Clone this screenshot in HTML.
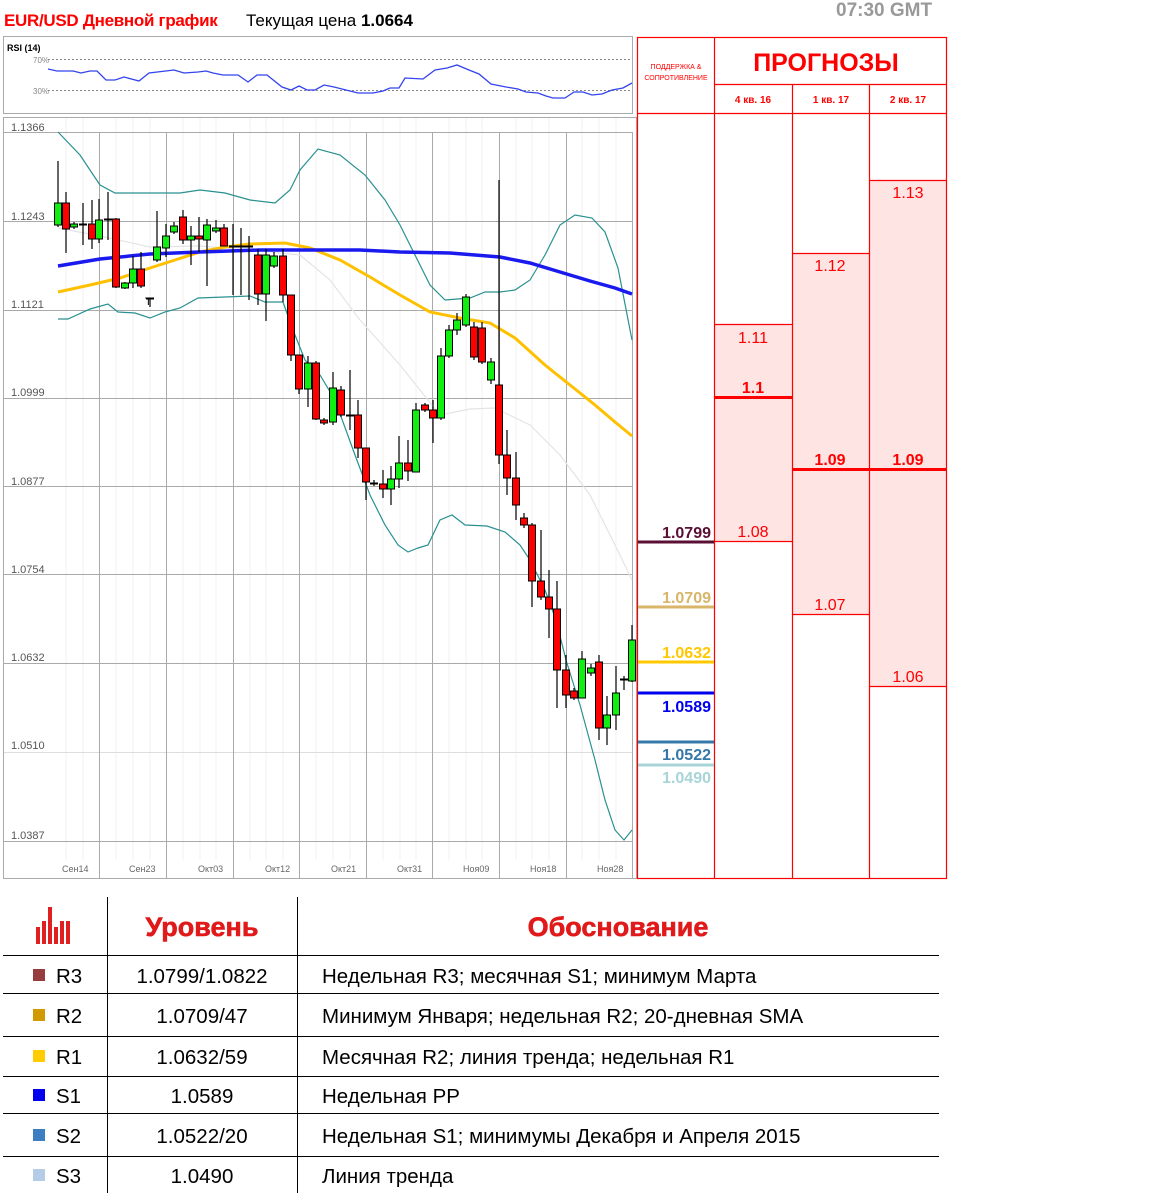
<!DOCTYPE html>
<html><head><meta charset="utf-8"><style>
body{margin:0;width:1152px;height:1193px;background:#fff;position:relative;overflow:hidden;font-family:"Liberation Sans","DejaVu Sans",sans-serif}
.a{position:absolute}
</style></head><body>
<div class="a" style="left:4px;top:11px;font-size:17px;font-weight:bold;color:#f00;letter-spacing:-0.3px">EUR/USD Дневной график</div>
<div class="a" style="left:246px;top:11px;font-size:17px;color:#000">Текущая цена <b>1.0664</b></div>
<div class="a" style="left:836px;top:0px;font-size:19px;font-weight:bold;color:#999">07:30 GMT</div>

<svg class="a" style="left:0;top:0" width="1152" height="890">
<rect x="3.5" y="36.5" width="629" height="77" fill="#fff" stroke="#aaa"/>
<text x="7" y="51" font-size="9" font-weight="bold" font-family="Liberation Sans">RSI (14)</text>
<text x="33" y="63" font-size="8" fill="#888" font-family="Liberation Sans">70%</text>
<text x="33" y="94" font-size="8" fill="#888" font-family="Liberation Sans">30%</text>
<line x1="48" y1="59.5" x2="632" y2="59.5" stroke="#888" stroke-dasharray="2,2"/>
<line x1="48" y1="90.5" x2="632" y2="90.5" stroke="#888" stroke-dasharray="2,2"/>
<polyline fill="none" stroke="#3344ee" stroke-width="1.3" points="48,69 57,71 73,71 81,73 90,71 97,71 106,80 115,80 124,77 139,81 149,73 174,70 184,73 198,72 206,71 213,73 223,75 238,75 248,82 257,75 267,75 282,87 291,90 299,86 307,90 315,90 324,85 334,87 346,90 358,93 373,93 383,91 390,88 399,88 405,78 423,79 435,70 447,68 457,65 469,70 479,74 491,84 506,87 518,89 526,92 538,93 546,96 553,98 565,98 574,92 583,92 592,95 602,94 612,90 623,88 632,83"/>
<rect x="3.5" y="117.5" width="633" height="761" fill="#fff" stroke="#aaa"/>
<g stroke="#f2f2f2">
<line x1="66" y1="118" x2="66" y2="860"/><line x1="83" y1="118" x2="83" y2="860"/><line x1="116" y1="118" x2="116" y2="860"/><line x1="133" y1="118" x2="133" y2="860"/><line x1="150" y1="118" x2="150" y2="860"/><line x1="183" y1="118" x2="183" y2="860"/><line x1="200" y1="118" x2="200" y2="860"/><line x1="216" y1="118" x2="216" y2="860"/><line x1="250" y1="118" x2="250" y2="860"/><line x1="266" y1="118" x2="266" y2="860"/><line x1="283" y1="118" x2="283" y2="860"/><line x1="316" y1="118" x2="316" y2="860"/><line x1="333" y1="118" x2="333" y2="860"/><line x1="350" y1="118" x2="350" y2="860"/><line x1="383" y1="118" x2="383" y2="860"/><line x1="400" y1="118" x2="400" y2="860"/><line x1="416" y1="118" x2="416" y2="860"/><line x1="449" y1="118" x2="449" y2="860"/><line x1="466" y1="118" x2="466" y2="860"/><line x1="482" y1="118" x2="482" y2="860"/><line x1="516" y1="118" x2="516" y2="860"/><line x1="532" y1="118" x2="532" y2="860"/><line x1="549" y1="118" x2="549" y2="860"/><line x1="582" y1="118" x2="582" y2="860"/><line x1="599" y1="118" x2="599" y2="860"/><line x1="616" y1="118" x2="616" y2="860"/>
</g>
<g stroke="#aaa">
<line x1="4" y1="132.5" x2="632" y2="132.5"/><line x1="4" y1="221.5" x2="632" y2="221.5"/><line x1="4" y1="310.5" x2="632" y2="310.5"/><line x1="4" y1="398.5" x2="632" y2="398.5"/><line x1="4" y1="486.5" x2="632" y2="486.5"/><line x1="4" y1="574.5" x2="632" y2="574.5"/><line x1="4" y1="663.5" x2="632" y2="663.5"/><line x1="4" y1="752.5" x2="632" y2="752.5" stroke="#ddd"/><line x1="4" y1="841.5" x2="632" y2="841.5"/>
<line x1="99.5" y1="132" x2="99.5" y2="878"/><line x1="166.5" y1="132" x2="166.5" y2="878"/><line x1="233.5" y1="132" x2="233.5" y2="878"/><line x1="299.5" y1="132" x2="299.5" y2="878"/><line x1="366.5" y1="132" x2="366.5" y2="878"/><line x1="432.5" y1="132" x2="432.5" y2="878"/><line x1="499.5" y1="132" x2="499.5" y2="878"/><line x1="566.5" y1="132" x2="566.5" y2="878"/><line x1="632.5" y1="132" x2="632.5" y2="878"/>
</g>
<g font-size="11" fill="#555" font-family="Liberation Sans">
<text x="11" y="131">1.1366</text><text x="11" y="220">1.1243</text><text x="11" y="308">1.1121</text><text x="11" y="396">1.0999</text><text x="11" y="485">1.0877</text><text x="11" y="573">1.0754</text><text x="11" y="661">1.0632</text><text x="11" y="749">1.0510</text><text x="11" y="839">1.0387</text>
</g>
<g font-size="9" fill="#666" font-family="Liberation Sans">
<text x="62" y="872">Сен14</text><text x="129" y="872">Сен23</text><text x="198" y="872">Окт03</text><text x="265" y="872">Окт12</text><text x="331" y="872">Окт21</text><text x="397" y="872">Окт31</text><text x="463" y="872">Ноя09</text><text x="530" y="872">Ноя18</text><text x="597" y="872">Ноя28</text>
</g>
<polyline fill="none" stroke="#e4e4e4" stroke-width="1.2" points="58,228 100,236 150,247 200,246 250,250 300,255 330,280 360,320 400,365 440,415 470,409 495,408 530,425 560,455 590,495 615,545 632,580"/>
<polyline fill="none" stroke="#2a9090" stroke-width="1.2" points="58,132 80,155 100,185 115,193 180,193 200,190 225,193 250,200 275,203 290,190 300,170 318,149 340,155 365,175 385,200 400,225 415,255 430,285 445,300 470,298 485,292 500,292 515,290 530,280 545,255 560,225 575,215 592,218 605,232 618,268 632,340"/>
<polyline fill="none" stroke="#2a9090" stroke-width="1.2" points="58,319 68,319 90,309 108,304 118,312 135,313 150,318 165,312 180,308 198,298 225,297 250,296 265,302 283,302 293,330 305,360 320,375 335,400 355,455 370,495 385,525 398,545 408,552 418,548 428,545 440,520 452,515 465,525 487,526 505,532 520,545 530,560 545,590 556,620 566,660 580,705 595,760 605,800 615,830 624,840 632,830"/>
<polyline fill="none" stroke="#ffc000" stroke-width="3" points="58,292 90,285 120,278 150,268 175,260 200,252 225,247 250,244 285,243 310,248 340,260 370,277 400,295 430,312 460,318 490,323 515,338 545,365 570,385 595,405 615,422 632,436"/>
<polyline fill="none" stroke="#1a1aee" stroke-width="3.5" points="58,266 100,259 150,254 200,252 260,250 320,250 360,250 400,252 450,253 500,257 530,263 560,272 590,281 615,288 632,294"/>
<g stroke="#000" stroke-width="1.2">
<line x1="58" y1="161" x2="58" y2="227"/><line x1="66" y1="192" x2="66" y2="253"/><line x1="74" y1="222" x2="74" y2="229"/><line x1="83" y1="203" x2="83" y2="245"/><line x1="92" y1="200" x2="92" y2="249"/><line x1="99" y1="199" x2="99" y2="243"/><line x1="108" y1="192" x2="108" y2="240"/><line x1="116" y1="218" x2="116" y2="288"/><line x1="125" y1="282" x2="125" y2="289"/><line x1="133" y1="256" x2="133" y2="288"/><line x1="141" y1="252" x2="141" y2="288"/><line x1="150" y1="298" x2="150" y2="307"/><line x1="157" y1="211" x2="157" y2="262"/><line x1="166" y1="224" x2="166" y2="257"/><line x1="174" y1="222" x2="174" y2="234"/><line x1="183" y1="210" x2="183" y2="244"/><line x1="191" y1="226" x2="191" y2="265"/><line x1="199" y1="217" x2="199" y2="252"/><line x1="207" y1="219" x2="207" y2="286"/><line x1="216" y1="220" x2="216" y2="233"/><line x1="224" y1="224" x2="224" y2="246"/><line x1="233" y1="224" x2="233" y2="295"/><line x1="241" y1="228" x2="241" y2="295"/><line x1="249" y1="236" x2="249" y2="300"/><line x1="258" y1="249" x2="258" y2="305"/><line x1="266" y1="249" x2="266" y2="321"/><line x1="274" y1="252" x2="274" y2="268"/><line x1="283" y1="249" x2="283" y2="302"/><line x1="291" y1="295" x2="291" y2="361"/><line x1="299" y1="355" x2="299" y2="394"/><line x1="308" y1="356" x2="308" y2="407"/><line x1="316" y1="361" x2="316" y2="420"/><line x1="324" y1="418" x2="324" y2="425"/><line x1="333" y1="372" x2="333" y2="425"/><line x1="341" y1="386" x2="341" y2="417"/><line x1="350" y1="370" x2="350" y2="430"/><line x1="358" y1="400" x2="358" y2="458"/><line x1="366" y1="448" x2="366" y2="500"/><line x1="374" y1="480" x2="374" y2="486"/><line x1="383" y1="470" x2="383" y2="498"/><line x1="391" y1="466" x2="391" y2="505"/><line x1="399" y1="436" x2="399" y2="488"/><line x1="408" y1="440" x2="408" y2="481"/><line x1="416" y1="403" x2="416" y2="472"/><line x1="425" y1="403" x2="425" y2="412"/><line x1="433" y1="400" x2="433" y2="443"/><line x1="441" y1="348" x2="441" y2="420"/><line x1="449" y1="325" x2="449" y2="358"/><line x1="457" y1="313" x2="457" y2="335"/><line x1="466" y1="294" x2="466" y2="327"/><line x1="474" y1="322" x2="474" y2="360"/><line x1="482" y1="322" x2="482" y2="364"/><line x1="491" y1="358" x2="491" y2="384"/><line x1="499" y1="180" x2="499" y2="464"/><line x1="507" y1="430" x2="507" y2="495"/><line x1="516" y1="452" x2="516" y2="520"/><line x1="524" y1="513" x2="524" y2="528"/><line x1="532" y1="523" x2="532" y2="607"/><line x1="541" y1="530" x2="541" y2="600"/><line x1="549" y1="570" x2="549" y2="638"/><line x1="557" y1="581" x2="557" y2="708"/><line x1="566" y1="655" x2="566" y2="708"/><line x1="574" y1="688" x2="574" y2="700"/><line x1="582" y1="651" x2="582" y2="698"/><line x1="591" y1="664" x2="591" y2="676"/><line x1="599" y1="655" x2="599" y2="740"/><line x1="607" y1="696" x2="607" y2="745"/><line x1="616" y1="666" x2="616" y2="730"/><line x1="624" y1="676" x2="624" y2="690"/><line x1="632" y1="625" x2="632" y2="682"/>
</g>
<g stroke="#000" stroke-width="1">
<rect x="54.5" y="203" width="7" height="22" fill="#11ee11"/><rect x="62.5" y="203" width="7" height="26" fill="#f00"/><rect x="70.5" y="224" width="7" height="3" fill="#11ee11"/><rect x="79.5" y="224" width="7" height="1" fill="#000"/><rect x="88.5" y="224" width="7" height="15" fill="#f00"/><rect x="95.5" y="220" width="7" height="19" fill="#11ee11"/><rect x="104.5" y="219" width="7" height="1" fill="#000"/><rect x="112.5" y="219" width="7" height="68" fill="#f00"/><rect x="121.5" y="283" width="7" height="5" fill="#11ee11"/><rect x="129.5" y="269" width="7" height="14" fill="#11ee11"/><rect x="137.5" y="269" width="7" height="17" fill="#f00"/><rect x="146.5" y="298" width="7" height="1" fill="#000"/><rect x="153.5" y="247" width="7" height="13" fill="#11ee11"/><rect x="162.5" y="236" width="7" height="12" fill="#11ee11"/><rect x="170.5" y="226" width="7" height="6" fill="#11ee11"/><rect x="179.5" y="217" width="7" height="23" fill="#f00"/><rect x="187.5" y="236" width="7" height="4" fill="#11ee11"/><rect x="195.5" y="236" width="7" height="3" fill="#f00"/><rect x="203.5" y="225" width="7" height="15" fill="#11ee11"/><rect x="212.5" y="228" width="7" height="3" fill="#11ee11"/><rect x="220.5" y="228" width="7" height="18" fill="#f00"/><rect x="229.5" y="246" width="7" height="1" fill="#000"/><rect x="237.5" y="246" width="7" height="1" fill="#000"/><rect x="245.5" y="246" width="7" height="1" fill="#000"/><rect x="254.5" y="255" width="7" height="39" fill="#f00"/><rect x="262.5" y="255" width="7" height="39" fill="#11ee11"/><rect x="270.5" y="256" width="7" height="10" fill="#11ee11"/><rect x="279.5" y="256" width="7" height="39" fill="#f00"/><rect x="287.5" y="295" width="7" height="60" fill="#f00"/><rect x="295.5" y="355" width="7" height="34" fill="#f00"/><rect x="304.5" y="363" width="7" height="26" fill="#11ee11"/><rect x="312.5" y="363" width="7" height="56" fill="#f00"/><rect x="320.5" y="420" width="7" height="3" fill="#f00"/><rect x="329.5" y="388" width="7" height="34" fill="#11ee11"/><rect x="337.5" y="390" width="7" height="25" fill="#f00"/><rect x="346.5" y="415" width="7" height="1" fill="#000"/><rect x="354.5" y="415" width="7" height="33" fill="#f00"/><rect x="362.5" y="448" width="7" height="34" fill="#f00"/><rect x="370.5" y="483" width="7" height="1" fill="#000"/><rect x="379.5" y="484" width="7" height="5" fill="#f00"/><rect x="387.5" y="479" width="7" height="10" fill="#11ee11"/><rect x="395.5" y="463" width="7" height="16" fill="#11ee11"/><rect x="404.5" y="463" width="7" height="8" fill="#f00"/><rect x="412.5" y="410" width="7" height="62" fill="#11ee11"/><rect x="421.5" y="405" width="7" height="5" fill="#f00"/><rect x="429.5" y="410" width="7" height="8" fill="#f00"/><rect x="437.5" y="356" width="7" height="62" fill="#11ee11"/><rect x="445.5" y="330" width="7" height="26" fill="#11ee11"/><rect x="453.5" y="320" width="7" height="10" fill="#11ee11"/><rect x="462.5" y="297" width="7" height="28" fill="#11ee11"/><rect x="470.5" y="327" width="7" height="30" fill="#f00"/><rect x="478.5" y="328" width="7" height="34" fill="#f00"/><rect x="487.5" y="362" width="7" height="18" fill="#11ee11"/><rect x="495.5" y="385" width="7" height="70" fill="#f00"/><rect x="503.5" y="455" width="7" height="23" fill="#f00"/><rect x="512.5" y="478" width="7" height="27" fill="#f00"/><rect x="520.5" y="518" width="7" height="7" fill="#f00"/><rect x="528.5" y="525" width="7" height="56" fill="#f00"/><rect x="537.5" y="581" width="7" height="16" fill="#f00"/><rect x="545.5" y="597" width="7" height="12" fill="#f00"/><rect x="553.5" y="609" width="7" height="61" fill="#f00"/><rect x="562.5" y="670" width="7" height="25" fill="#f00"/><rect x="570.5" y="691" width="7" height="7" fill="#f00"/><rect x="578.5" y="659" width="7" height="39" fill="#11ee11"/><rect x="587.5" y="668" width="7" height="5" fill="#11ee11"/><rect x="595.5" y="662" width="7" height="66" fill="#f00"/><rect x="603.5" y="715" width="7" height="13" fill="#11ee11"/><rect x="612.5" y="693" width="7" height="22" fill="#11ee11"/><rect x="620.5" y="679" width="7" height="1" fill="#f00"/><rect x="628.5" y="640" width="7" height="41" fill="#11ee11"/>
</g>
<text x="145" y="305" font-size="11" font-family="Liberation Sans">T</text>

<rect x="714" y="324" width="78" height="217" fill="#ffe4e4"/>
<rect x="792" y="253" width="77" height="361" fill="#ffe4e4"/>
<rect x="869" y="180" width="78" height="506" fill="#ffe4e4"/>
<g stroke="#f00" stroke-width="1.2" fill="none">
<rect x="637.5" y="37.5" width="309" height="841"/>
<line x1="714.5" y1="37" x2="714.5" y2="878"/><line x1="792.5" y1="85" x2="792.5" y2="878"/><line x1="869.5" y1="85" x2="869.5" y2="878"/>
<line x1="714" y1="84.5" x2="947" y2="84.5"/><line x1="637" y1="113.5" x2="947" y2="113.5"/>
<line x1="714" y1="324.5" x2="792" y2="324.5"/><line x1="714" y1="541.5" x2="792" y2="541.5"/>
<line x1="792" y1="253.5" x2="869" y2="253.5"/><line x1="792" y1="614.5" x2="869" y2="614.5"/>
<line x1="869" y1="180.5" x2="947" y2="180.5"/><line x1="869" y1="686.5" x2="947" y2="686.5"/>
</g>
<line x1="714" y1="397.5" x2="792" y2="397.5" stroke="#f00" stroke-width="3"/>
<line x1="792" y1="469.5" x2="947" y2="469.5" stroke="#f00" stroke-width="3"/>
<g font-family="Liberation Sans" fill="#f00" text-anchor="middle">
<text x="676" y="69" font-size="7">ПОДДЕРЖКА &amp;</text>
<text x="676" y="80" font-size="7">СОПРОТИВЛЕНИЕ</text>
<text x="826" y="71" font-size="25" font-weight="bold">ПРОГНОЗЫ</text>
<text x="753" y="103" font-size="10" font-weight="bold">4 кв. 16</text>
<text x="831" y="103" font-size="10" font-weight="bold">1 кв. 17</text>
<text x="908" y="103" font-size="10" font-weight="bold">2 кв. 17</text>
<g font-size="16"><text x="753" y="343">1.11</text><text x="753" y="537">1.08</text><text x="830" y="271">1.12</text><text x="830" y="610">1.07</text><text x="908" y="198">1.13</text><text x="908" y="682">1.06</text></g>
<g font-size="16" font-weight="bold"><text x="753" y="393">1.1</text><text x="830" y="465">1.09</text><text x="908" y="465">1.09</text></g>
</g>
<g stroke-width="3">
<line x1="638" y1="542" x2="714" y2="542" stroke="#5a0f35"/>
<line x1="638" y1="607" x2="714" y2="607" stroke="#d9b56a"/>
<line x1="638" y1="662" x2="714" y2="662" stroke="#ffc800"/>
<line x1="638" y1="693" x2="714" y2="693" stroke="#0000ee"/>
<line x1="638" y1="742" x2="714" y2="742" stroke="#3578a8"/>
<line x1="638" y1="765" x2="714" y2="765" stroke="#a8d4d8"/>
</g>
<g font-family="Liberation Sans" font-size="16" font-weight="bold" text-anchor="end">
<text x="711" y="538" fill="#5a0f35">1.0799</text>
<text x="711" y="603" fill="#d9b56a">1.0709</text>
<text x="711" y="658" fill="#ffc800">1.0632</text>
<text x="711" y="712" fill="#0000ee">1.0589</text>
<text x="711" y="760" fill="#3578a8">1.0522</text>
<text x="711" y="783" fill="#a8d4d8">1.0490</text>
</g>
</svg>

<svg class="a" style="left:0;top:890px" width="1152" height="303">
<g fill="#e02020"><rect x="36" y="37" width="4" height="17"/><rect x="42" y="31" width="4" height="23"/><rect x="48" y="17" width="4" height="37"/><rect x="54" y="37" width="4" height="17"/><rect x="60" y="31" width="4" height="23"/><rect x="66" y="31" width="4" height="23"/></g>
<text x="202" y="46" font-family="Liberation Sans" font-size="27" font-weight="bold" fill="#e01a1a" text-anchor="middle" stroke="#e01a1a" stroke-width="0.6">Уровень</text>
<text x="618" y="46" font-family="Liberation Sans" font-size="27" font-weight="bold" fill="#e01a1a" text-anchor="middle" stroke="#e01a1a" stroke-width="0.6">Обоснование</text>
<g stroke="#000" stroke-width="1">
<line x1="107.5" y1="7" x2="107.5" y2="303"/><line x1="297.5" y1="7" x2="297.5" y2="303"/>
<line x1="3" y1="65.5" x2="939" y2="65.5"/><line x1="3" y1="103.5" x2="939" y2="103.5"/><line x1="3" y1="146.5" x2="939" y2="146.5"/><line x1="3" y1="186.5" x2="939" y2="186.5"/><line x1="3" y1="223.5" x2="939" y2="223.5"/><line x1="3" y1="266.5" x2="939" y2="266.5"/>
</g>
<rect x="33" y="79" width="12" height="12" fill="#953c3c"/>
<rect x="33" y="119" width="12" height="12" fill="#d09a00"/>
<rect x="33" y="160" width="12" height="12" fill="#ffcc00"/>
<rect x="33" y="199" width="12" height="12" fill="#0000ee"/>
<rect x="33" y="239" width="12" height="12" fill="#3c7fc0"/>
<rect x="33" y="279" width="12" height="12" fill="#b4cce6"/>
<g font-family="Liberation Sans" font-size="20.5" fill="#000">
<text x="56" y="93">R3</text><text x="56" y="133">R2</text><text x="56" y="174">R1</text><text x="56" y="213">S1</text><text x="56" y="253">S2</text><text x="56" y="293">S3</text>
<g text-anchor="middle"><text x="202" y="93">1.0799/1.0822</text><text x="202" y="133">1.0709/47</text><text x="202" y="174">1.0632/59</text><text x="202" y="213">1.0589</text><text x="202" y="253">1.0522/20</text><text x="202" y="293">1.0490</text></g>
<text x="322" y="93">Недельная R3; месячная S1; минимум Марта</text>
<text x="322" y="133">Минимум Января; недельная R2; 20-дневная SMA</text>
<text x="322" y="174">Месячная R2; линия тренда; недельная R1</text>
<text x="322" y="213">Недельная PP</text>
<text x="322" y="253">Недельная S1; минимумы Декабря и Апреля 2015</text>
<text x="322" y="293">Линия тренда</text>
</g>
</svg>
</body></html>
